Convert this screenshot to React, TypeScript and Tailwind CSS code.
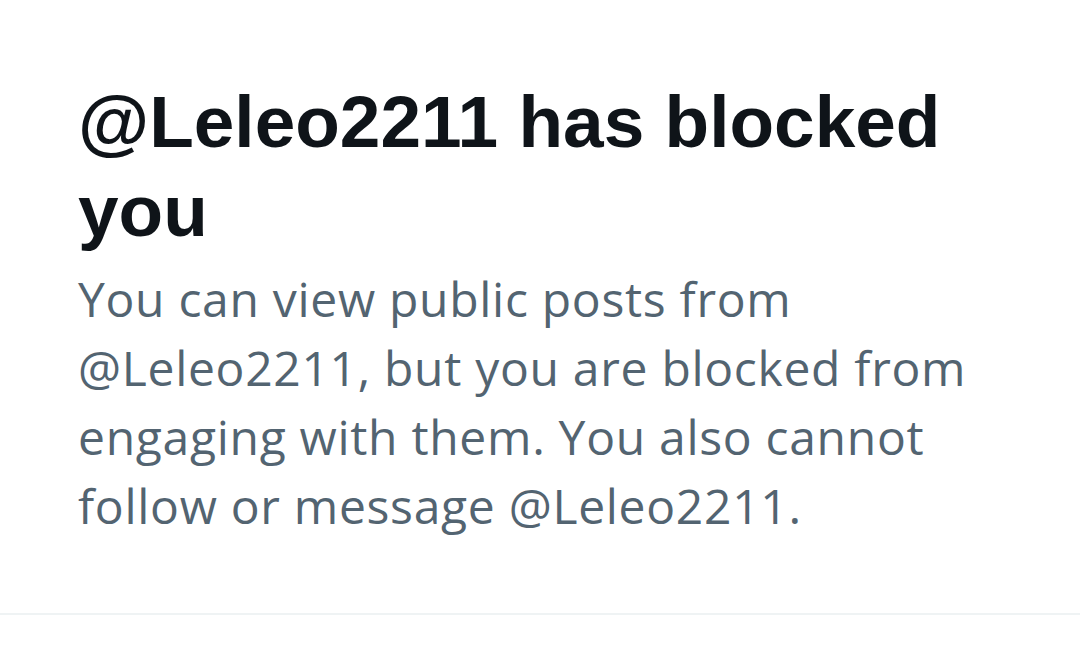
export default function App() {
  return (
    <div className="w-[1080px] h-[648px] bg-white overflow-hidden flex flex-col">
      <div className="pl-[78px] pr-[78px] pt-[77px]">
        <h1
          className="text-[73px] leading-[89px] font-bold text-[#0f1419]"
          style={{ fontFamily: '"Liberation Sans", Arial, sans-serif' }}
        >
          @Leleo2211 has blocked you
        </h1>
        <p
          className="mt-[9px] text-[48px] leading-[69px] tracking-[0.7px] text-[#536471]"
          style={{ fontFamily: '"Open Sans", "Noto Sans", sans-serif' }}
        >
          You can view public posts from @Leleo2211, but you are blocked from engaging with them. You also cannot follow or message @Leleo2211.
        </p>
      </div>
      <div className="mt-[73px] h-[2px] bg-[#eff3f4] w-full" />
    </div>
  );
}
